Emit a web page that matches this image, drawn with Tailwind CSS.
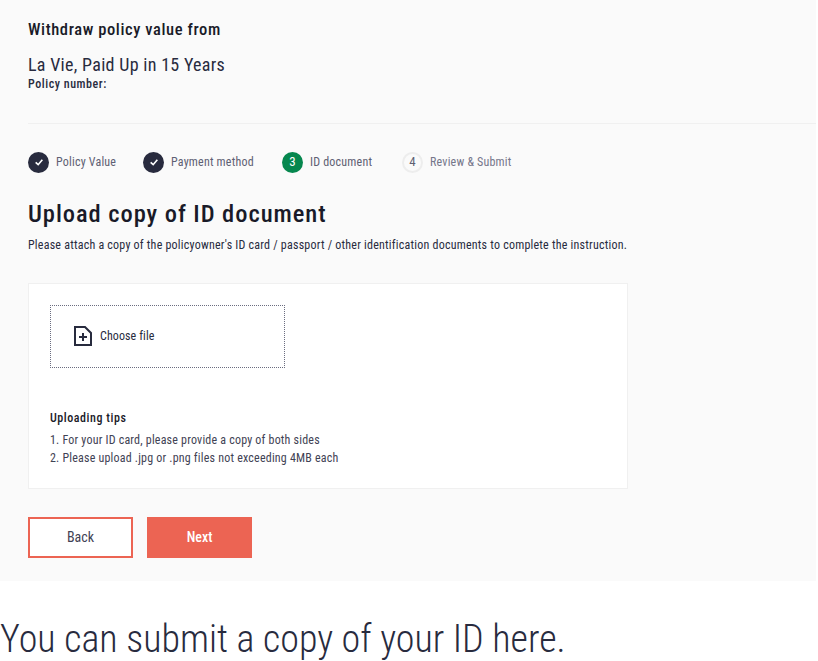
<!DOCTYPE html>
<html lang="en">
<head>
  <meta charset="UTF-8" />
  <meta name="viewport" content="width=device-width, initial-scale=1.0"/>
  <title>Upload ID document</title>
  <script src="https://cdn.jsdelivr.net/npm/@tailwindcss/browser@4"></script>
</head>
<body class="bg-white font-['Roboto',sans-serif] [font-stretch:85%] text-[#282b3e] overflow-hidden">

  <div class="bg-[#fafafa] h-[581px] w-[816px] pl-[28px]">
    <div class="pt-[20px] h-[124px] border-b border-[#f0f0f0]">
      <h2 class="text-[16.5px] leading-[20px] font-medium tracking-[0.6px] text-[#191a28]">Withdraw policy value from</h2>
      <p class="mt-[13px] text-[18px] leading-[23px] tracking-[0.3px]">La Vie, Paid Up in 15 Years</p>
      <p class="text-[12px] leading-[16px] font-medium tracking-[0.55px]">Policy number:</p>
    </div>

    <!-- Stepper -->
    <ol class="flex items-center mt-[27px] h-[22px] text-[12px] tracking-[0.2px] text-[#5e6073]">
      <li class="flex items-center gap-[7px] w-[115px]">
        <span class="w-[21px] h-[21px] rounded-full bg-[#282b3e] flex items-center justify-center">
          <svg width="10" height="10" viewBox="0 0 12 12" fill="none" stroke="white" stroke-width="2"><path d="M2 6.5 5 9.2 10 3.2"/></svg>
        </span>
        Policy Value
      </li>
      <li class="flex items-center gap-[7px] w-[139px]">
        <span class="w-[21px] h-[21px] rounded-full bg-[#282b3e] flex items-center justify-center">
          <svg width="10" height="10" viewBox="0 0 12 12" fill="none" stroke="white" stroke-width="2"><path d="M2 6.5 5 9.2 10 3.2"/></svg>
        </span>
        Payment method
      </li>
      <li class="flex items-center gap-[7px] w-[120px]">
        <span class="w-[21px] h-[21px] rounded-full bg-[#06874e] text-white text-[13px] flex items-center justify-center">3</span>
        ID document
      </li>
      <li class="flex items-center gap-[7px] text-[#75768a]">
        <span class="w-[21px] h-[21px] rounded-full border-2 border-[#ededed] text-[#5e6073] text-[13px] flex items-center justify-center">4</span>
        Review &amp; Submit
      </li>
    </ol>

    <h1 class="mt-[27px] text-[24.5px] leading-[28px] font-medium tracking-[0.95px] text-[#191a28]">Upload copy of ID document</h1>
    <p class="mt-[9px] text-[12px] leading-[16px] tracking-[0.22px]">Please attach a copy of the policyowner's ID card / passport / other identification documents to complete the instruction.</p>

    <!-- Upload card -->
    <div class="mt-[30px] w-[600px] h-[206px] bg-white border border-[#f0f0f0] px-[21px] pt-[21px]">
      <div class="w-[235px] h-[63px] pb-[2px] border border-dotted border-[#6b6d80] flex items-center pl-[23px] gap-[8px] text-[12px] tracking-[0.1px]">
        <svg width="18" height="20" viewBox="0 0 18 20" fill="none" stroke="#282b3e" stroke-width="2">
          <path d="M1 1H11L17 7V19H1Z"/>
          <path d="M9 7V15M5 11H13"/>
        </svg>
        Choose file
      </div>
      <h3 class="mt-[42px] text-[12px] leading-[16px] font-medium tracking-[0.55px] text-[#191a28]">Uploading tips</h3>
      <ol class="mt-[5px] text-[12px] leading-[18px] tracking-[0.2px] text-[#3f4254]">
        <li>1. For your ID card, please provide a copy of both sides</li>
        <li>2. Please upload .jpg or .png files not exceeding 4MB each</li>
      </ol>
    </div>

    <div class="flex gap-[14px] mt-[28px]">
      <button class="w-[105px] h-[41px] bg-white border-2 border-[#ec6453] text-[14px] text-[#3f4254]">Back</button>
      <button class="w-[105px] h-[41px] bg-[#ec6453] text-[14px] font-medium text-white">Next</button>
    </div>
  </div>

  <p class="mt-[33px] text-[38px] leading-[50px] font-light whitespace-nowrap">You can submit a copy of your ID here.</p>

</body>
</html>
